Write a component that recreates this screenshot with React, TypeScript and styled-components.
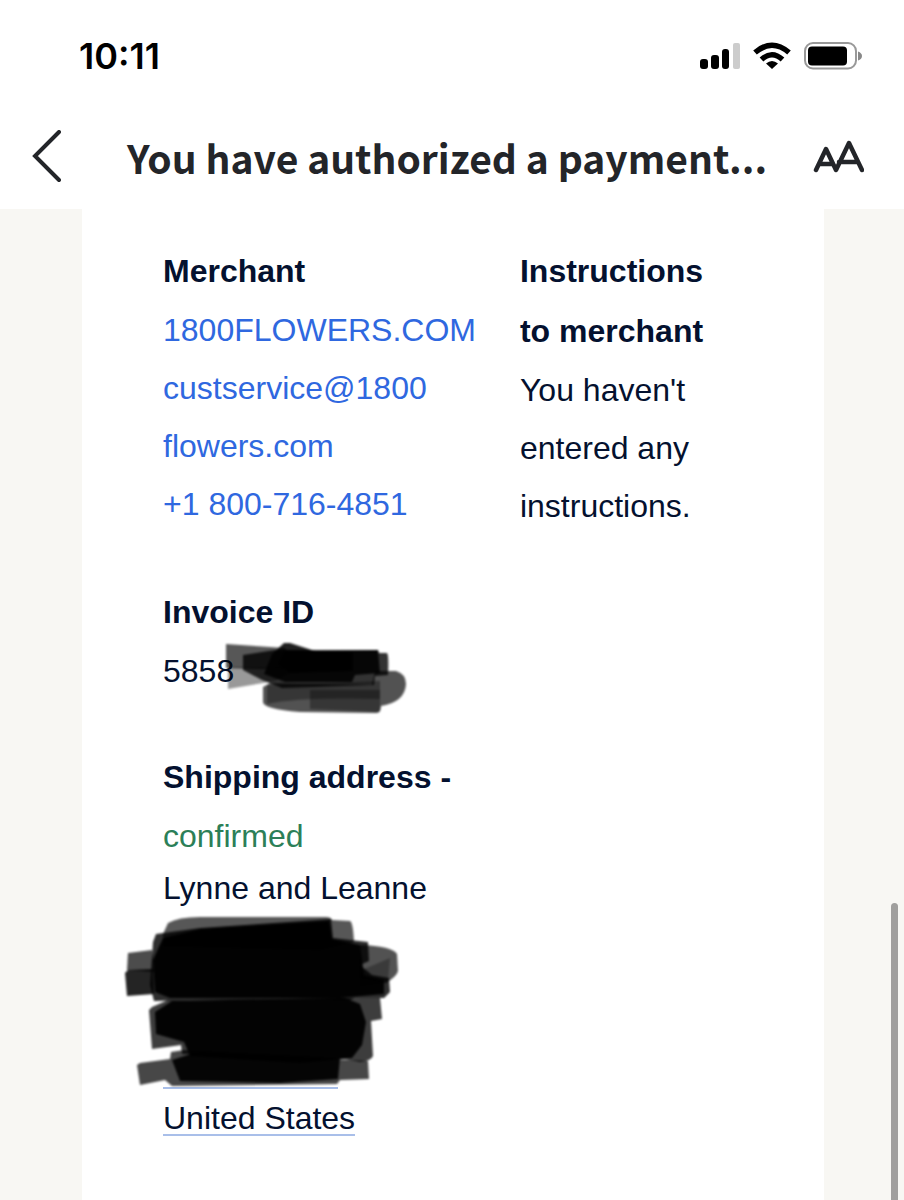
import styled, { createGlobalStyle } from "styled-components";

const GlobalStyle = createGlobalStyle`
  * {
    box-sizing: border-box;
  }

  body {
    margin: 0;
    background-color: #ffffff;
    font-family: "Liberation Sans", Arial, sans-serif;
  }
`;

const invoiceInk = [
  { d: "M226 644L285 648L300 670L226 668Z", opacity: 0.66 },
  { d: "M228 667L300 668L275 681L228 689Z", opacity: 0.4 },
  {
    d: "M243 655L275 650L378 650L379 653L387 653Q389 655 388 675L375 676L374 685L282 688L262 680L243 670Z",
    opacity: 0.8,
  },
  {
    d: "M272 654L284 643L290 643L315 651L378 650L380 673L355 675L352 682L285 682L264 674Z",
    opacity: 0.88,
  },
  { d: "M285 650L353 652L353 671L290 673L278 664Z", opacity: 1 },
  {
    d: "M263 687L270 683L372 685L375 671L396 671Q406 674 406 684Q405 702 381 706Q381 712 377 713L300 712Q263 709 263 702Z",
    opacity: 0.68,
  },
  { d: "M267 685L380 681L380 699Q300 697 267 704Z", opacity: 0.34 },
  { d: "M310 690L380 690L380 712L310 709Z", opacity: 0.34 },
];

const addressInk = [
  {
    d: "M163 934L168 923Q178 917 200 917L326 917Q331 917 332 920L350 921Q353 922 354 942L320 950L163 946Z",
    opacity: 0.66,
  },
  { d: "M128 953L152 950L154 972L127 970Z", opacity: 0.7 },
  { d: "M125 973L128 970L153 969L154 994L127 996Z", opacity: 0.86 },
  {
    d: "M360 945Q392 946 397 954L398 971Q397 976 386 983L360 978Z",
    opacity: 0.68,
  },
  { d: "M362 970L390 958L388 982L360 986Z", opacity: 0.3 },
  {
    d: "M153 942L156 934L200 928L331 919L333 938L368 942L369 961L360 965L372 975L389 978L390 992L384 998L355 998L350 1000L190 1000L154 1001L150 985Z",
    opacity: 0.82,
  },
  {
    d: "M163 938L200 929L329 921L332 939L360 945L364 975L384 980L384 994L340 998L170 998L155 992L153 960Z",
    opacity: 0.96,
  },
  {
    d: "M149 1010L152 1007L168 1000L362 998L380 998L382 1019L371 1021L373 1056Q371 1061 360 1062L340 1058L182 1054L181 1045L152 1049Z",
    opacity: 0.76,
  },
  {
    d: "M155 1012L172 1001L345 998L360 1004L366 1022L362 1045L352 1058L300 1063L190 1056L184 1042L156 1034Z",
    opacity: 0.95,
  },
  {
    d: "M137 1065L140 1063L170 1059L171 1052L184 1050L368 1061L369 1079L340 1080L337 1084L172 1086L165 1080L140 1085Z",
    opacity: 0.72,
  },
  {
    d: "M172 1060L200 1051L340 1058L338 1079L280 1083L180 1081Z",
    opacity: 0.93,
  },
];

const App = () => {
  return (
    <Page>
      <GlobalStyle />
      <Header>
        <StatusBar>
          <Time>10:11</Time>
          <StatusIcons>
            <svg width="40" height="28" viewBox="0 0 40 28" aria-hidden="true">
              <rect x="0" y="17" width="8" height="10" rx="3" />
              <rect x="11" y="13" width="8" height="14" rx="3" />
              <rect x="22" y="7" width="7" height="20" rx="3" />
              <rect x="33" y="1" width="7" height="26" rx="2" fill="#cccccc" />
            </svg>
            <svg width="38" height="28" viewBox="0 0 38 28" aria-hidden="true">
              <g fill="none" stroke="#000000" strokeWidth="5.500">
                <path d="M2 10.500Q19 -4 36 10.500" />
                <path d="M8.500 17.500Q19 8 29.500 17.500" />
              </g>
              <path d="M19 27L13 21.500Q19 16.500 25 21.500Z" />
            </svg>
            <svg width="58" height="28" viewBox="0 0 58 28" aria-hidden="true">
              <rect
                x="1"
                y="1"
                width="51"
                height="25.500"
                rx="8"
                fill="none"
                stroke="#999999"
                strokeWidth="2"
              />
              <rect x="4" y="4.500" width="39" height="19" rx="4" />
              <path d="M54 9.500Q58 11 58 14Q58 17 54 18.500Z" fill="#888888" />
            </svg>
          </StatusIcons>
        </StatusBar>
        <NavBar>
          <IconButton type="button" aria-label="Back">
            <svg width="30" height="54" viewBox="0 0 30 54">
              <path
                d="M27 2L3 26L27 50"
                fill="none"
                stroke="#232529"
                strokeWidth="4"
                strokeLinecap="round"
              />
            </svg>
          </IconButton>
          <Title>You have authorized a payment...</Title>
          <IconButton type="button" aria-label="Text size">
            <svg width="52" height="34" viewBox="0 0 52 34">
              <path
                d="M4 30L14 9L24 30L37 3L50 30M8 24H20M27 22H46"
                fill="none"
                stroke="#232529"
                strokeWidth="4.500"
                strokeLinecap="round"
                strokeLinejoin="round"
              />
            </svg>
          </IconButton>
        </NavBar>
      </Header>
      <Content>
        <Card>
          <Columns>
            <div>
              <Label>Merchant</Label>
              <Text $color="#2f68e0">1800FLOWERS.COM</Text>
              <ContactLink href="mailto:custservice@1800flowers.com">
                custservice@1800
                <wbr />
                flowers.com
              </ContactLink>
              <ContactLink href="tel:+18007164851">+1 800-716-4851</ContactLink>
            </div>
            <Instructions>
              <Label>Instructions to merchant</Label>
              <Text>You haven't entered any instructions.</Text>
            </Instructions>
          </Columns>
          <section>
            <Label>Invoice ID</Label>
            <Marked>
              <Text>5858</Text>
              <InvoiceInk viewBox="220 635 195 85" aria-hidden="true">
                {invoiceInk.map((stroke) => (
                  <path key={stroke.d} d={stroke.d} opacity={stroke.opacity} />
                ))}
              </InvoiceInk>
            </Marked>
          </section>
          <section>
            <Label>Shipping address -</Label>
            <Text $color="#2c7f58">confirmed</Text>
            <Marked>
              <Address>
                <AddressLine>Lynne and Leanne</AddressLine>
                <AddressLine />
                <AddressLine />
                <AddressLine />
                <AddressLine>
                  <HiddenLine />
                </AddressLine>
                <AddressLine>
                  <AddressLink href="#map">United States</AddressLink>
                </AddressLine>
              </Address>
              <AddressInk viewBox="120 910 285 180" aria-hidden="true">
                {addressInk.map((stroke) => (
                  <path key={stroke.d} d={stroke.d} opacity={stroke.opacity} />
                ))}
              </AddressInk>
            </Marked>
          </section>
        </Card>
      </Content>
      <ScrollThumb />
    </Page>
  );
};

const Page = styled.div`
  min-height: 100vh;
  display: flex;
  flex-direction: column;
`;

const Header = styled.header`
  padding: 32px 40px 24px 32px;
`;

const StatusBar = styled.div`
  height: 48px;
  display: flex;
  align-items: center;
  justify-content: space-between;
  padding: 0 2px 0 47px;
`;

const Time = styled.span`
  font-family: Inter, sans-serif;
  font-size: 36px;
  font-weight: 600;
  line-height: 48px;
  color: #000000;
`;

const StatusIcons = styled.div`
  display: flex;
  align-items: center;
  gap: 13px;
`;

const NavBar = styled.div`
  height: 105px;
  display: flex;
  align-items: center;
  padding-top: 48px;
`;

const IconButton = styled.button`
  display: flex;
  flex-shrink: 0;
  padding: 0;
  border: none;
  background: none;
`;

const Title = styled.h1`
  flex: 1;
  margin: 0;
  padding-left: 65px;
  font-family: "Noto Sans CJK SC", sans-serif;
  font-size: 39px;
  font-weight: 700;
  line-height: 56px;
  white-space: nowrap;
  color: #232529;
`;

const Content = styled.main`
  flex: 1;
  display: flex;
  padding: 0 80px 0 82px;
  background-color: #f8f7f3;
`;

const Card = styled.div`
  flex: 1;
  display: flex;
  flex-direction: column;
  gap: 47px;
  padding: 32px 0 48px 81px;
  background-color: #ffffff;
`;

const Columns = styled.section`
  display: grid;
  grid-template-columns: 54fr 46fr;
`;

const Instructions = styled.div`
  padding-right: 96px;
`;

const Label = styled.h2`
  margin: 0;
  font-size: 32px;
  font-weight: bold;
  line-height: 60px;
  color: #04112f;
`;

const Text = styled.p<{ $color?: string }>`
  margin: 0;
  font-size: 32px;
  line-height: 58px;
  color: ${({ $color }) => $color || "#04112f"};
`;

const ContactLink = styled.a`
  display: block;
  font-size: 32px;
  line-height: 58px;
  text-decoration: none;
  color: #2f68e0;
`;

const Marked = styled.div`
  position: relative;
`;

const Address = styled.address`
  font-style: normal;
  font-size: 32px;
  line-height: 46px;
  color: #04112f;
`;

const AddressLine = styled.div`
  height: 46px;
`;

const HiddenLine = styled.div`
  width: 175px;
  height: 40px;
  border-bottom: 2px solid #a9bfe9;
`;

const AddressLink = styled.a`
  display: inline-block;
  height: 41px;
  border-bottom: 2px solid #a9bfe9;
  text-decoration: none;
  color: inherit;
`;

// marker strokes have slightly soft edges
const Ink = styled.svg`
  position: absolute;
  filter: blur(1px);
  pointer-events: none;
`;

const InvoiceInk = styled(Ink)`
  top: -7px;
  left: 57px;
  width: 195px;
  height: 85px;
`;

const AddressInk = styled(Ink)`
  top: 45px;
  left: -43px;
  width: 285px;
  height: 180px;
`;

const ScrollThumb = styled.div`
  position: fixed;
  top: 903px;
  right: 6px;
  bottom: 0;
  width: 7px;
  border-radius: 4px 4px 0 0;
  background-color: #a09f9d;
`;

export default App;
